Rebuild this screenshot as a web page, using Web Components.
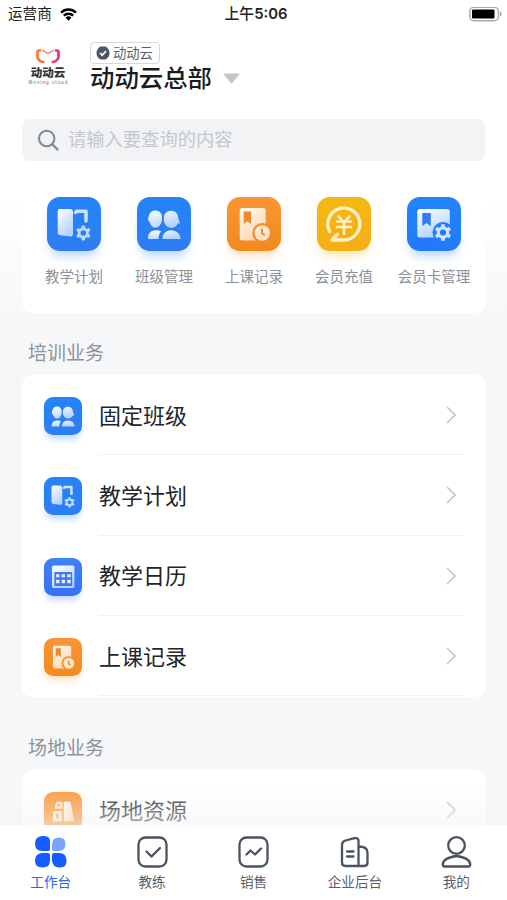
<!DOCTYPE html>
<html lang="zh-CN">
<head>
<meta charset="utf-8">
<title>动动云</title>
<style>
html,body{margin:0;height:100%;background:#fff}
body{font-family:"Liberation Sans","Noto Sans CJK SC",sans-serif;overflow:hidden}
</style>
</head>
<body>
<work-app></work-app>
<script>
function define(name, render) {
  customElements.define(name, class extends HTMLElement {
    connectedCallback() {
      if (this.shadowRoot) return;
      this.attachShadow({ mode: 'open' }).innerHTML = render(this);
    }
  });
}

/* Six-tooth gear with an open centre. */
function gear(cx, cy, r, fill) {
  let teeth = '';
  for (let i = 0; i < 6; i++)
    teeth += `<rect x="${cx - r * .23}" y="${cy - r}" width="${r * .46}" height="${r * .45}" rx=".7" fill="${fill}" transform="rotate(${i * 60} ${cx} ${cy})"/>`;
  return teeth + `<circle cx="${cx}" cy="${cy}" r="${r * .56}" fill="none" stroke="${fill}" stroke-width="${r * .38}"/>`;
}

const GLYPHS = {
  plan: ['#2384f7', '#2f7cf2', `<path d="M12.500 12H23q3 0 3 3v22q0 3-3 2.500l-10-1.200q-2.300-.3-2.300-2.300V14.500q0-2.500 1.800-2.500z" fill="url(#g)"/><path d="m28.500 15.300 1.300-1.100h9.200V24" fill="none" stroke="#cfe2ff" stroke-width="3.500" stroke-linejoin="round" stroke-linecap="round"/>${gear(36.300, 36, 7.400, '#bfdaff')}`],
  people: ['#2384f7', '#2f7cf2', `<path d="M18.500 13.500c4.500 0 7 3.500 6.600 8.500-.4 5-3 8.700-6.600 8.700-3 0-5-2.700-6-5.700-2-1.500-1.500-4-.7-5.500.5-3.700 3-6 6.700-6zM34 13.700c4.700 0 7.200 3.300 7.200 7.300l1.800 5.200-2.300.5c-1 2.500-3.500 4-6.700 4-4.200 0-7.200-4-7.200-9 0-5 3-8 7.200-8z" fill="url(#g)"/><path d="M11.200 42c-.8-4.500 2-8.700 8-8.700q3.300 0 5 1-2.500 2.500-2.600 7.700zM25.500 42c-.3-4.500 3-8.700 8.500-8.700 5.700 0 9.500 4 9.500 8.700z" fill="url(#g)"/>`],
  record: ['#f99535', '#f28a1d', `<rect x="12.700" y="11" width="26" height="32.500" rx="2.500" fill="url(#w)"/><path d="M16.700 14.500H24V27l-3.700-2.700L16.700 27z" fill="#f08a2b"/><circle cx="35.300" cy="36" r="10" fill="#f2892a"/><circle cx="35.300" cy="36" r="7.800" fill="#ffe5ce"/><path d="M35 31.800v4.500l2.800 2" fill="none" stroke="#f08a2b" stroke-width="2"/>`],
  yuan: ['#f5b912', '#f6ad16', `<path d="M12.700 34.500A16 16 0 1 1 27 43H15l5.500-5.500" fill="none" stroke="#fff0c4" stroke-width="3.300" stroke-linejoin="round" stroke-linecap="round"/><path d="m21.700 19.500 3 3.200m7.800-3.200-3 3.200M20 24.500h14M20 30h14m-7-5.500V37" fill="none" stroke="#fff0c4" stroke-width="2.600" stroke-linecap="round"/>`],
  card: ['#2384fa', '#2179f8', `<rect x="10.300" y="12" width="32.500" height="28.500" rx="2.500" fill="url(#g)"/><path d="M15.300 16h8.500v13.200L19.500 26l-4.200 3.200z" fill="#2a7ff5"/><circle cx="36" cy="35.500" r="10.500" fill="#247df8"/>${gear(36, 35.500, 8.300, '#cfe2ff')}`],
  calendar: ['#3d82fa', '#396ff7', `<rect x="11.400" y="10.500" width="31.800" height="32.200" rx="2.500" fill="url(#g)"/><rect x="14.700" y="20" width="25.300" height="19.800" fill="#3c76f5"/><path d="M17 23h5v4.500h-5zm8 0h5v4.500h-5zm8 0h5v4.500h-5zM17 31h5v5h-5zm8 0h5v5h-5zm8 0h5v5h-5z" fill="#e8f0ff"/>`],
  venue: ['#fa9530', '#f28a1d', `<path d="M17.500 14H26v9.700H14.700z" fill="#ffe5ce"/><path d="M19 17.500h3.500v3h-4z" fill="#f69c4c"/><path d="M13 27h12.500v15h-13z" fill="#ffe5ce"/><path d="M17 31h4v6.500h-4z" fill="#f69c4c"/><path d="M28 14h9.500L43 41.500H28z" fill="url(#w)"/>`]
};

define('app-icon', el => {
  const [a, b, art] = GLYPHS[el.getAttribute('name')];
  const s = +el.getAttribute('size');
  return `<style>
:host{display:block;flex:none;width:${s}px;height:${s}px}
svg{display:block;border-radius:${s * .24}px;box-shadow:0 ${s * .15}px ${s * .18}px ${-s * .06}px ${a}50}
</style><svg width="${s}" height="${s}" viewBox="0 0 54 54"><defs>
<linearGradient id="b" x2="0" y2="1"><stop stop-color="${a}"/><stop offset="1" stop-color="${b}"/></linearGradient>
<linearGradient id="g" x2=".5" y2="1"><stop stop-color="#fff"/><stop offset="1" stop-color="#b3d2ff"/></linearGradient>
<linearGradient id="w" x1=".2" x2=".8" y2="1"><stop stop-color="#fff6ee"/><stop offset="1" stop-color="#ffd3aa"/></linearGradient>
</defs><rect width="54" height="54" fill="url(#b)"/>${art}</svg>`;
});

define('status-bar', () => `<style>
:host{display:grid;grid-template-columns:1fr auto 1fr;align-items:center;height:28px;padding:0 5px 0 8px;font-size:14.600px;line-height:20px;color:#222}
.l{display:flex;align-items:center;gap:8px}
.t{font-family:Inter,"Noto Sans CJK SC",sans-serif;font-weight:600;font-size:14.800px;padding-left:2px}
.t span{font-weight:500}
.r{justify-self:end}svg{display:block}
</style><div class="l"><span>运营商</span><svg width="17" height="13" viewBox="0 0 17 13"><g fill="none" stroke="#000" stroke-width="2.400"><path d="M1 4.600a10.800 10.800 0 0 1 15 0M3.800 7.700a6.800 6.800 0 0 1 9.400 0"/></g><path d="M8.500 12.800 5.600 9.700a4.200 4.200 0 0 1 5.800 0z"/></svg></div>
<div class="t"><span>上午</span>5:06</div>
<div class="r"><svg width="33" height="15" viewBox="0 0 33 15"><rect x=".8" y=".3" width="28.600" height="13.400" rx="4" fill="#fff" stroke="#aaa" stroke-width="1.400"/><rect x="3" y="2.500" width="22.500" height="9" rx="1"/><path d="M31 4.500q1.500.5 1.500 2.400T31 9.300z" fill="#999"/></svg></div>`);

define('org-header', () => `<style>
:host{display:flex;height:91px;box-sizing:border-box;padding:14px 28px 0 28px}
.logo{width:40px;display:flex;flex-direction:column;align-items:center;padding-top:7px}
.logo b{font-size:11.500px;line-height:14px;color:#333;font-weight:900;margin-top:2px}
.logo small{font:700 4.600px/6px "Liberation Sans",sans-serif;letter-spacing:.85px;color:#999;white-space:nowrap;margin-top:0;margin-right:-1px}
.info{margin-left:22px}
.badge{display:inline-flex;box-sizing:border-box;height:22px;width:70px;align-items:center;gap:3px;padding-left:5px;border:1.500px solid #d5d9de;border-radius:4px;font-size:13.300px;line-height:18px;color:#555e69;white-space:nowrap}
.badge span{padding-top:1px}
.name{display:flex;align-items:center;gap:11px;margin-top:-2px;font-size:24.400px;line-height:34px;font-weight:500;color:#191b1e}
.name svg{margin-top:-2px}
svg{display:block;flex:none}
</style><div class="logo"><svg width="24" height="15" viewBox="0 0 24 15"><defs><linearGradient id="l"><stop stop-color="#ff7a38"/><stop offset=".5" stop-color="#fa5360"/><stop offset="1" stop-color="#e3347c"/></linearGradient></defs><g fill="none" stroke="url(#l)" stroke-width="2.700"><path d="M5 1.500H3Q1.500 1.500 1.500 3v5q0 1.500 1 2.200l2 2q1 .8 4 .8M19 1.500h2q1.500 0 1.500 1.500v5q0 1.500-1 2.200l-2 2q-1 .8-4 .8"/></g><path d="m6 1 6 3.700L18 1" fill="none" stroke="#fa8d79" stroke-width="1.500"/></svg><b>动动云</b><small>Moving cloud</small></div>
<div class="info"><div class="badge"><svg width="14" height="14" viewBox="0 0 14 14"><path d="M4.500.5h5Q13.500 3 13.500 7t-4 6.500h-5Q.5 11 .5 7t4-6.500z" fill="#4b5563"/><path d="m4 7 2.200 2.200L10 5.200" stroke="#fff" stroke-width="1.700" fill="none"/></svg><span>动动云</span></div>
<div class="name">动动云总部<svg width="17" height="11" viewBox="0 0 17 11"><path d="M1 .5h15q1 0 .3 1L9.500 9.800q-1 1-2 0L.7 1.500Q0 .5 1 .5z" fill="#c6c6c6"/></svg></div></div>`);

define('search-box', () => `<style>
:host{display:flex;box-sizing:border-box;height:42px;margin:0 22px;padding:0 15px;align-items:center;gap:9px;background:#f1f3f5;border-radius:8px;font-size:18.300px;line-height:26px;color:#c5c8cd}
</style><svg width="22" height="22" viewBox="0 0 22 22"><g fill="none" stroke="#838990" stroke-width="2" stroke-linecap="round"><circle cx="9.700" cy="9.500" r="7.700"/><path d="m15.500 15.500 5 5" stroke-width="2.400"/></g></svg><span>请输入要查询的内容</span>`);

define('quick-item', el => `<style>
:host{display:flex;flex-direction:column;align-items:center;width:90px;font-size:14.500px;line-height:20px;color:#8b9097;white-space:nowrap}
span{margin-top:16px}
</style><app-icon name="${el.getAttribute('icon')}" size="54"></app-icon><span><slot></slot></span>`);

define('quick-card', () => `<style>
:host{display:flex;box-sizing:border-box;justify-content:center;height:152px;margin:0 21px 0 22px;padding-top:36px;background:#fff;border-radius:10px}
</style><slot></slot>`);

define('menu-row', el => `<style>
:host{display:grid;grid-template-columns:38px 1fr;column-gap:17px;height:80.300px;padding-left:22px;align-items:center;color:#222529;font-size:22px;line-height:32px}
app-icon{margin-top:2px}
.m{display:flex;box-sizing:border-box;height:100%;align-items:center;justify-content:space-between;margin-right:22px;padding-right:8px;border-bottom:1px solid #f1f2f4}
span{padding-top:4px}
svg{display:block;margin-top:1px}
</style><app-icon name="${el.getAttribute('icon')}" size="38"></app-icon><div class="m"><span><slot></slot></span><svg width="10" height="18" viewBox="0 0 10 18"><path d="m1 1 8 8-8 8" fill="none" stroke="#c3c5c8" stroke-width="1.600"/></svg></div>`);

define('menu-section', el => `<style>
:host{display:block;padding:25px 21px 0 22px}
h2{margin:0 0 5px 6px;font-size:19px;line-height:32px;font-weight:400;color:#8d939b}
.c{background:#fff;border-radius:10px;padding-bottom:1px}
</style><h2>${el.getAttribute('label')}</h2><div class="c"><slot></slot></div>`);

const TABS = {
  work: '<path d="M9 1c4 0 7 1 7 5v8q0 2-2 2H8Q1 16 1 8.500T9 1zM8 18h6q2 0 2 2v5.500q0 7-7.500 7T1 25.500 8 18zm12 0h5.500q7 0 7 7.500t-7 7-7.500-7V20q0-2 2-2z" fill="#155bff"/><path d="M25 2.500q6.500 0 6.500 6.500T25 16h-5q-2 0-2-2V9.500q0-7 7-7z" fill="#7ba4ff"/>',
  coach: '<rect x="2.500" y="2.500" width="28" height="29" rx="7"/><path d="m10.500 16.500 5 5 8.500-8.500"/>',
  sales: '<rect x="2.500" y="2.500" width="28" height="29" rx="7"/><path d="m9.500 19.500 4-4 4.500 4 6-6"/>',
  company: '<path d="M4 10q0-3.500 3.500-4.500l9-2.300q4-.9 4 2.800v25H7.500Q4 31 4 27.500zM20.500 11.500q9 0 9 6v10q0 3.500-3.500 3.500h-5.500M9 16.500h6.500M9 21.500h6.500"/>',
  mine: '<circle cx="16.500" cy="10.500" r="8.300"/><path d="M4.500 31.500q-1.700 0-1.700-2 0-6.500 13.700-8.500 13.700 2 13.700 8.500 0 2-1.700 2z"/>'
};
define('tab-item', el => `<style>
:host{display:flex;flex:1;flex-direction:column;align-items:center;padding-top:10px;font-size:13.600px;line-height:20px;color:#596069}
:host([active]){color:#2864f5}
svg{display:block}
span{margin-top:4px}
</style><svg width="33" height="34" viewBox="0 0 33 34" fill="none" stroke="${el.hasAttribute('active') ? 'none' : '#4a5260'}" stroke-width="2.300" stroke-linecap="round" stroke-linejoin="round">${TABS[el.getAttribute('icon')]}</svg><span><slot></slot></span>`);

define('tab-bar', () => `<style>
:host{display:flex;position:relative;flex:none;height:75px;background:#fff}
:host::before{content:"";position:absolute;left:0;right:0;bottom:100%;height:44px;background:linear-gradient(#f4f5f700,#f4f5f74d 50%,#f4f5f799)}
</style><slot></slot>`);

define('work-app', () => `<style>
:host{display:flex;flex-direction:column;width:507px;height:900px;overflow:hidden;background:linear-gradient(#fff 200px,#f6f7f9 320px)}
main{flex:1;min-height:0;overflow:hidden}
</style><main><status-bar></status-bar><org-header></org-header><search-box></search-box>
<quick-card><quick-item icon="plan">教学计划</quick-item><quick-item icon="people">班级管理</quick-item><quick-item icon="record">上课记录</quick-item><quick-item icon="yuan">会员充值</quick-item><quick-item icon="card">会员卡管理</quick-item></quick-card>
<menu-section label="培训业务"><menu-row icon="people">固定班级</menu-row><menu-row icon="plan">教学计划</menu-row><menu-row icon="calendar">教学日历</menu-row><menu-row icon="record">上课记录</menu-row></menu-section>
<menu-section label="场地业务" style="margin-top:11px"><menu-row icon="venue">场地资源</menu-row></menu-section></main>
<tab-bar><tab-item icon="work" active>工作台</tab-item><tab-item icon="coach">教练</tab-item><tab-item icon="sales">销售</tab-item><tab-item icon="company">企业后台</tab-item><tab-item icon="mine">我的</tab-item></tab-bar>`);
</script>
</body>
</html>
